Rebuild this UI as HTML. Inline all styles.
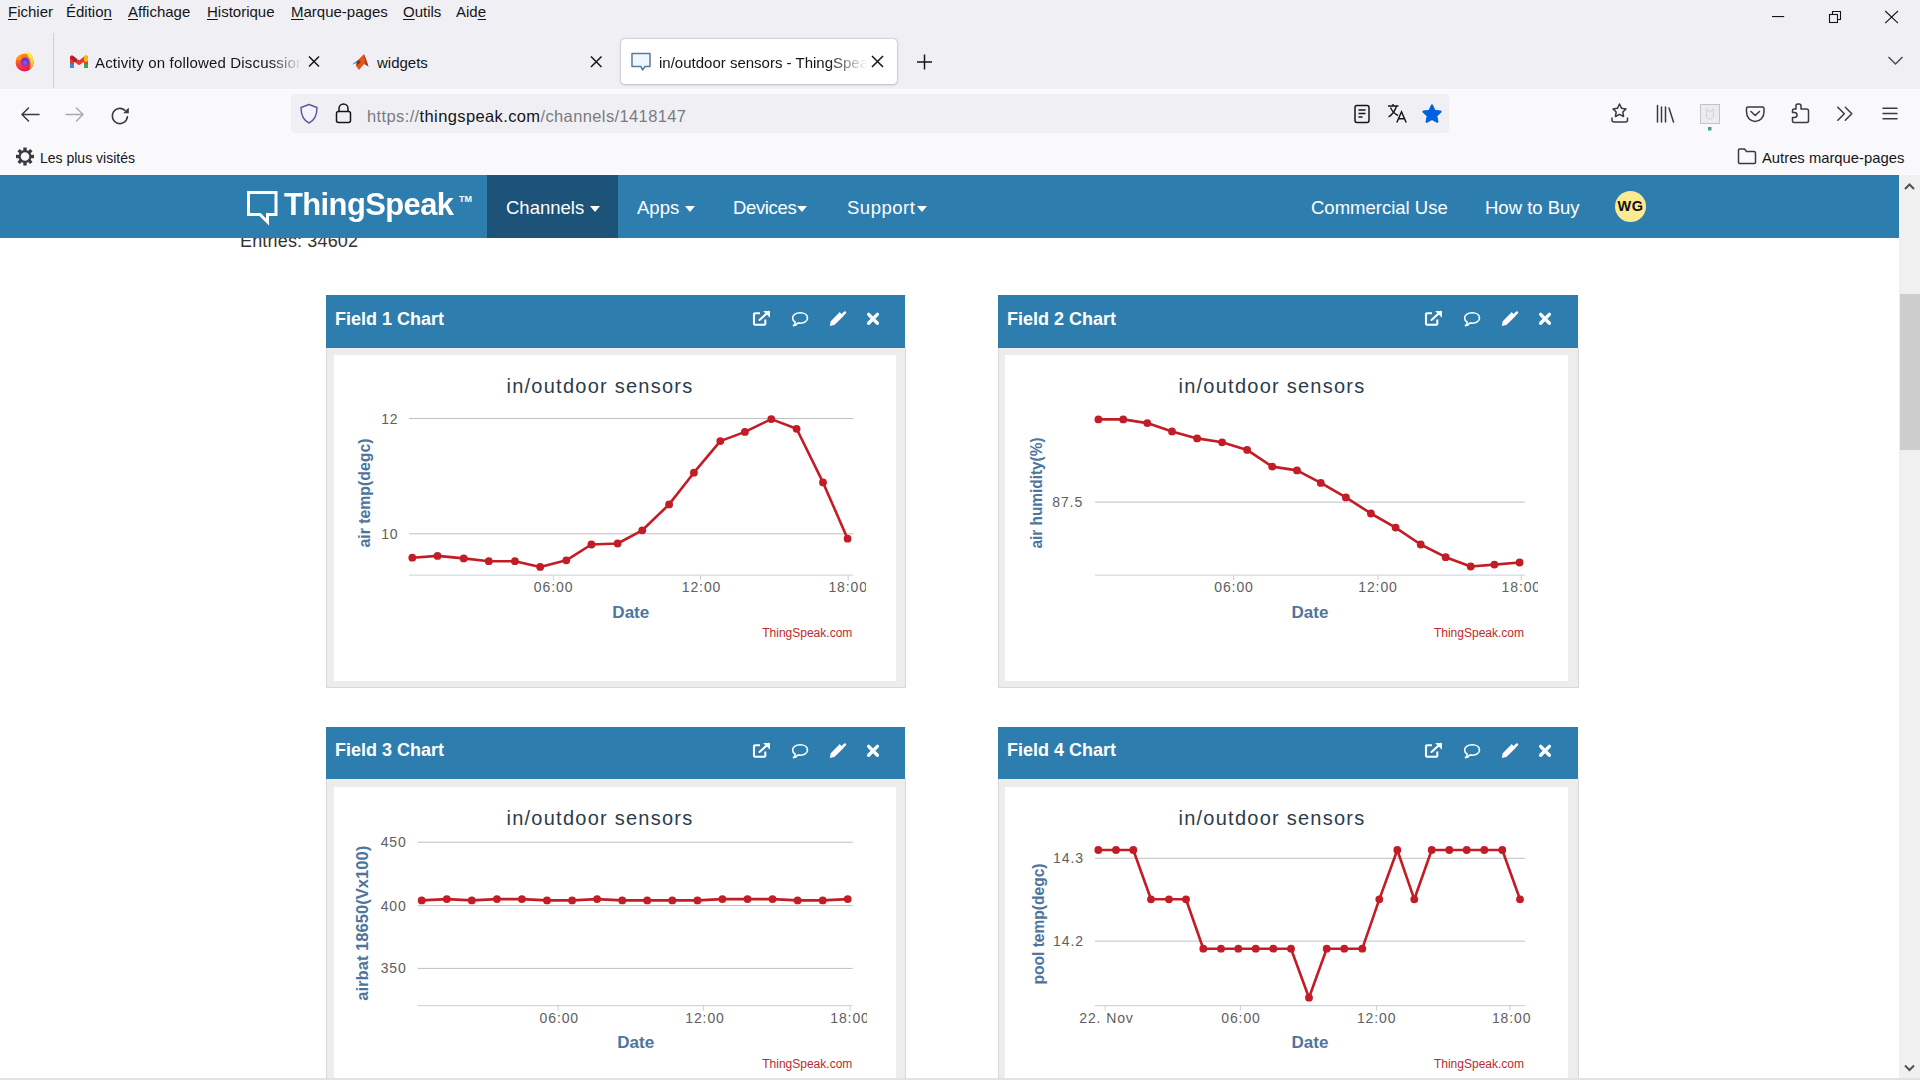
<!DOCTYPE html>
<html><head><meta charset="utf-8"><title>in/outdoor sensors - ThingSpeak IoT</title>
<style>
*{box-sizing:border-box}
html,body{margin:0;padding:0;width:1920px;height:1080px;overflow:hidden;background:#fff;font-family:"Liberation Sans",sans-serif;color:#15141a}
.a{position:absolute}
svg{position:absolute;overflow:visible}
#menubar{left:0;top:0;width:1920px;height:89px;background:#f0f0f4}
.mi{position:absolute;top:3px;font-size:15px;line-height:18px;color:#15141a}
.mi u{text-decoration:underline;text-underline-offset:2px;text-decoration-thickness:1px}
#nav{left:0;top:89px;width:1920px;height:86px;background:#f9f9fb}
#urlbar{left:291px;top:94px;width:1158px;height:39px;background:#f0f0f4;border-radius:4px}
.tab{position:absolute;font-size:15px;line-height:18px;white-space:nowrap;overflow:hidden}
#content{left:0;top:175px;width:1899px;height:905px;background:#fff;overflow:hidden}
#tsnav{left:0;top:175px;width:1899px;height:63px;background:#2d7eaf}
.nv{position:absolute;top:197px;font-size:18.5px;line-height:22px;color:#fff;white-space:nowrap}
.caret{display:inline-block;width:0;height:0;margin-left:1px;border-left:5px solid transparent;border-right:5px solid transparent;border-top:6px solid #fff;vertical-align:middle;position:relative;top:0px}
.ph{position:absolute;background:#2d7eaf;color:#fff}
.pt{position:absolute;left:9px;top:13px;font-weight:bold;font-size:18px;line-height:22px;white-space:nowrap}
.pi{top:16px}
.pb{position:absolute;background:#ededed;border:1px solid #d8d8d8;border-top:0}
.pw{position:absolute;background:#fff}
.ch{position:absolute}
.ttl{font-size:20px;letter-spacing:1.25px;fill:#2b3b4d;font-family:"Liberation Sans",sans-serif}
.lbl{font-size:14px;letter-spacing:.9px;fill:#606060;font-family:"Liberation Sans",sans-serif}
.at{font-size:16px;font-weight:bold;fill:#4d759e;font-family:"Liberation Sans",sans-serif}
.cr{font-size:12px;fill:#c0282d;font-family:"Liberation Sans",sans-serif}
#sb{left:1899px;top:175px;width:21px;height:905px;background:#f0f0f0}
#thumb{left:1900px;top:294px;width:20px;height:156px;background:#cdcdcd}
</style></head>
<body>
<!-- ============ BROWSER CHROME ============ -->
<div id="menubar" class="a"></div>
<div class="mi" style="left:8px"><u>F</u>ichier</div>
<div class="mi" style="left:66px">Éditio<u>n</u></div>
<div class="mi" style="left:128px"><u>A</u>ffichage</div>
<div class="mi" style="left:207px"><u>H</u>istorique</div>
<div class="mi" style="left:291px"><u>M</u>arque-pages</div>
<div class="mi" style="left:403px"><u>O</u>utils</div>
<div class="mi" style="left:456px">Aid<u>e</u></div>

<!-- window controls -->
<svg style="left:1760px;top:0" width="160" height="80" viewBox="1760 0 160 80">
 <rect x="1772" y="16" width="12.2" height="1.1" fill="#15141a"/>
 <g fill="none" stroke="#15141a" stroke-width="1.1">
  <rect x="1829.5" y="14.5" width="8" height="8"/>
  <path d="M1832.5 14.5 V11.5 H1840.5 V19.5 H1837.5"/>
  <path d="M1885.2 11 L1898 23.2 M1898 11 L1885.2 23.2"/>
 </g>
 <path d="M1888.5 57 L1895.5 64 L1902.5 57" fill="none" stroke="#4a4a55" stroke-width="1.5"/>
</svg>
<!-- tabs -->
<svg style="left:0;top:28px" width="60" height="62" viewBox="0 28 60 62">
 <defs>
  <linearGradient id="ffb" x1="0" y1="0" x2="0.3" y2="1"><stop offset="0" stop-color="#ffa20f"/><stop offset="0.45" stop-color="#ff5a2a"/><stop offset="1" stop-color="#e8144f"/></linearGradient>
  <linearGradient id="ffy" x1="0" y1="0" x2="0" y2="1"><stop offset="0" stop-color="#f3f84a"/><stop offset="1" stop-color="#ffb02a"/></linearGradient>
  <radialGradient id="ffp" cx="0.5" cy="0.6" r="0.6"><stop offset="0" stop-color="#8c5cff"/><stop offset="1" stop-color="#6a22b8"/></radialGradient>
 </defs>
 <circle cx="24.6" cy="62.4" r="9" fill="url(#ffb)"/>
 <path d="M26.5 51 C31 52.5 34 57 33.6 62.5 C33.3 66 31.5 68.5 29.5 69.5 C31 66 31 61 28.5 57.5 C27.5 55.5 26.5 53.5 26.5 51 Z" fill="url(#ffy)"/>
 <path d="M16 60 C17 56.5 19.5 55 22 55 C20.5 56.5 20.5 58 21.5 59.5 Z" fill="#ff9a10"/>
 <ellipse cx="25" cy="62" rx="4" ry="4.3" fill="url(#ffp)"/>
 <path d="M17 64.5 C19 69 24 70.5 28.5 69 C25 68.5 22 67 20.5 65 Z" fill="#ff2d6a" opacity=".7"/>
 <rect x="53" y="33" width="1" height="55" fill="#cfcfd8"/>
</svg>
<svg style="left:64px;top:48px" width="30" height="26" viewBox="64 48 30 26">
 <path d="M72 68 V62" fill="none" stroke="#4285f4" stroke-width="4"/>
 <path d="M86 68 V62" fill="none" stroke="#34a853" stroke-width="4"/>
 <path d="M72 62.5 V57.5 L79 63 L86 57.5 V62.5" fill="none" stroke="#e53a2f" stroke-width="4" stroke-linejoin="round" stroke-linecap="round"/>
 <path d="M72 57.5 L75 60" stroke="#b3202a" stroke-width="4" stroke-linecap="round"/>
 <path d="M86 57.5 V60" stroke="#fbbc04" stroke-width="4" stroke-linecap="round"/>
</svg>
<div class="tab" style="left:95px;top:54px;width:207px;letter-spacing:.17px;color:#15141a;-webkit-mask-image:linear-gradient(90deg,#000 175px,transparent 207px)">Activity on followed Discussion</div>
<svg style="left:300px;top:50px" width="24" height="24" viewBox="300 50 24 24">
 <path d="M309 56.5 L319 66.5 M319 56.5 L309 66.5" stroke="#15141a" stroke-width="1.5"/>
</svg>
<svg style="left:350px;top:52px" width="20" height="20" viewBox="350 52 20 20">
 <path d="M352 64.5 L358 60 L361 62 Z" fill="#3b86b8"/>
 <path d="M358 60 L364 54 L368.5 66.5 L364 64 L359 70 L356 66 Z" fill="#e2561e"/>
 <path d="M364 54 L368.5 66.5 L365.5 64.5 Z" fill="#a8370e"/>
 <path d="M356 66 L358 60 L361 62 Z" fill="#8c2a0a"/>
</svg>
<div class="tab" style="left:377px;top:54px;color:#15141a">widgets</div>
<svg style="left:585px;top:50px" width="24" height="24" viewBox="585 50 24 24">
 <path d="M591 56.5 L601.5 67 M601.5 56.5 L591 67" stroke="#15141a" stroke-width="1.5"/>
</svg>
<!-- active tab -->
<div class="a" style="left:621px;top:39px;width:276px;height:45px;background:#fff;border-radius:4px;box-shadow:0 0 2px rgba(0,0,0,.35),0 1px 3px rgba(0,0,0,.12)"></div>
<svg style="left:628px;top:50px" width="26" height="24" viewBox="628 50 26 24">
 <path d="M632 53.5 H650 V66.5 H645 L642.5 70 L641 66.5 H632 Z" fill="#eef7ff" stroke="#5d7a95" stroke-width="1.5" stroke-linejoin="round"/>
</svg>
<div class="tab" style="left:659px;top:54px;width:208px;color:#15141a;-webkit-mask-image:linear-gradient(90deg,#000 170px,transparent 208px)">in/outdoor sensors - ThingSpeak IoT</div>
<svg style="left:866px;top:50px" width="24" height="24" viewBox="866 50 24 24">
 <path d="M872 56 L883 67 M883 56 L872 67" stroke="#15141a" stroke-width="1.5"/>
</svg>
<svg style="left:912px;top:50px" width="24" height="24" viewBox="912 50 24 24">
 <path d="M924.5 54.5 V69.5 M917 62 H932" stroke="#15141a" stroke-width="1.5"/>
</svg>

<!-- nav toolbar -->
<div id="nav" class="a"></div>
<div class="a" style="left:0;top:89px;width:1920px;height:1px;background:#fdfdff"></div>
<div id="urlbar" class="a"></div>
<svg style="left:0;top:90px" width="160" height="50" viewBox="0 90 160 50">
 <g fill="none" stroke="#3a3944" stroke-width="1.5" stroke-linecap="round" stroke-linejoin="round">
  <path d="M22 114.5 H39 M28.5 108 L22 114.5 L28.5 121"/>
 </g>
 <g fill="none" stroke="#a9a9ae" stroke-width="1.5" stroke-linecap="round" stroke-linejoin="round">
  <path d="M66 114.5 H83 M76.5 108 L83 114.5 L76.5 121"/>
 </g>
 <g fill="none" stroke="#3a3944" stroke-width="1.5" stroke-linecap="round" stroke-linejoin="round">
  <path d="M127.4 116.9 A7.6 7.6 0 1 1 125 110.4" stroke-width="1.6"/>
 </g>
</svg>
<svg style="left:100px;top:100px" width="40" height="28" viewBox="100 100 40 28"><path d="M128.8 107.6 V113.2 H123.2 Z" fill="#3a3944"/></svg>
<svg style="left:296px;top:100px" width="60" height="28" viewBox="296 100 60 28">
 <path d="M309 104.5 L317 107.5 C317 115 314 120.5 309 123 C304 120.5 301 115 301 107.5 Z" fill="#f5f1ff" stroke="#5b5b9b" stroke-width="1.5" stroke-linejoin="round"/>
 <g fill="none" stroke="#15141a" stroke-width="1.5">
  <path d="M339 111.5 V108.5 A4.5 4.5 0 0 1 348 108.5 V111.5"/>
  <rect x="336.5" y="111.5" width="14" height="11" rx="2"/>
 </g>
</svg>
<div class="a" style="left:367px;top:106px;font-size:16.5px;line-height:20px;letter-spacing:.38px;white-space:nowrap;color:#7a7a80"><span>https://</span><span style="color:#15141a">thingspeak.com</span><span>/channels/1418147</span></div>
<svg style="left:1350px;top:100px" width="100" height="28" viewBox="1350 100 100 28">
 <g fill="none" stroke="#15141a" stroke-width="1.5">
  <rect x="1355" y="105.5" width="14" height="17" rx="2"/>
  <path d="M1358.5 110 H1365.5 M1358.5 113.5 H1365.5 M1358.5 117 H1362.5"/>
  <path d="M1388 106 H1398.5 M1393 104 V106 M1396.5 106 C1395 111 1392.5 114.5 1388.5 117 M1390.5 107.5 C1392 111 1395 114 1398 115.5" stroke-width="1.4"/>
  <path d="M1396.8 122.5 L1401.5 111.8 L1406.2 122.5 M1398.5 118.8 H1404.5" stroke-width="1.5"/>
 </g>
 <path d="M1432 105.5 L1434.6 110.9 L1440.5 111.7 L1436.2 115.8 L1437.3 121.7 L1432 118.9 L1426.7 121.7 L1427.8 115.8 L1423.5 111.7 L1429.4 110.9 Z" fill="#0061e0" stroke="#0061e0" stroke-width="2.2" stroke-linejoin="round"/>
</svg>
<svg style="left:1600px;top:95px" width="320" height="40" viewBox="1600 95 320 40">
 <g fill="none" stroke="#3a3944" stroke-width="1.5" stroke-linecap="round" stroke-linejoin="round">
  <path d="M1619.5 104 L1621.6 108.3 L1626 108.9 L1622.8 112 L1623.6 116.5 L1619.5 114.3 L1615.4 116.5 L1616.2 112 L1613 108.9 L1617.4 108.3 Z"/>
  <path d="M1612 118 V120 Q1612 122 1614 122 H1625.5 Q1627.5 122 1627.5 120 V118"/>
  <path d="M1657.5 105.5 V122 M1661.5 107 V122 M1665.5 107 V122 M1669 108 L1673.5 122"/>
  <path d="M1748 107 H1762.5 C1763.5 107 1764 107.5 1764 108.5 V112 C1764 117.5 1760 121.5 1755.2 121.5 C1750.3 121.5 1746.5 117.5 1746.5 112 V108.5 C1746.5 107.5 1747 107 1748 107 Z"/>
  <path d="M1751 111.5 L1755.2 115.5 L1759.5 111.5"/>
  <path d="M1796 109 V105.5 C1796 104.5 1797 104 1798 104 H1799 C1800 104 1801 105 1801 106 V109 H1806.5 C1807.5 109 1808.5 110 1808.5 111 V121 C1808.5 122 1807.5 122.5 1806.5 122.5 H1794 C1793 122.5 1792.5 122 1792.5 121 V117.5 H1794.5 C1796 117.5 1797 116.5 1797 115 C1797 113.5 1796 112.5 1794.5 112.5 H1792.5 V111 C1792.5 110 1793 109 1794 109 Z"/>
  <path d="M1837.8 107.3 L1844.3 113.8 L1837.8 120.3 M1845.3 107.3 L1851.8 113.8 L1845.3 120.3"/>
  <path d="M1883 108.3 H1897 M1883 113.5 H1897 M1883 118.7 H1897"/>
 </g>
 <rect x="1700.5" y="104.5" width="19" height="19" fill="#ececee" stroke="#c4c4c8"/>
 <path d="M1706.5 108.5 L1708 111 H1712 L1713.5 108.5 V116 C1713.5 118 1712 119 1710 119 C1708 119 1706.5 118 1706.5 116 Z" fill="none" stroke="#d6d0d6" stroke-width="1"/>
 <rect x="1708" y="127" width="3.5" height="3.5" fill="#3fa287"/>
</svg>

<!-- bookmarks -->
<svg style="left:10px;top:142px" width="30" height="30" viewBox="10 142 30 30">
 <g transform="translate(25,156.5)">
  <circle r="5.4" fill="none" stroke="#3a3944" stroke-width="2.2"/>
  <g fill="#3a3944"><rect x="-1.7" y="-9" width="3.4" height="3.8" transform="rotate(0)"/><rect x="-1.7" y="-9" width="3.4" height="3.8" transform="rotate(45)"/><rect x="-1.7" y="-9" width="3.4" height="3.8" transform="rotate(90)"/><rect x="-1.7" y="-9" width="3.4" height="3.8" transform="rotate(135)"/><rect x="-1.7" y="-9" width="3.4" height="3.8" transform="rotate(180)"/><rect x="-1.7" y="-9" width="3.4" height="3.8" transform="rotate(225)"/><rect x="-1.7" y="-9" width="3.4" height="3.8" transform="rotate(270)"/><rect x="-1.7" y="-9" width="3.4" height="3.8" transform="rotate(315)"/></g>
 </g>
</svg>
<div class="a" style="left:40px;top:149px;font-size:14px;line-height:18px;white-space:nowrap">Les plus visités</div>
<svg style="left:1730px;top:142px" width="30" height="30" viewBox="1730 142 30 30">
 <path d="M1739.5 149 H1744.5 L1746.5 151.5 H1754 Q1755.5 151.5 1755.5 153 V162.5 Q1755.5 163.5 1754.5 163.5 H1739.5 Q1738.5 163.5 1738.5 162.5 V150 Q1738.5 149 1739.5 149 Z" fill="none" stroke="#3a3944" stroke-width="1.5" stroke-linejoin="round"/>
</svg>
<div class="a" style="left:1762px;top:149px;font-size:14.8px;line-height:18px;white-space:nowrap">Autres marque-pages</div>

<!-- ============ PAGE CONTENT ============ -->
<div id="content" class="a"></div>
<div class="a" style="left:240px;top:230px;font-size:18px;letter-spacing:.15px;line-height:22px;color:#333;white-space:nowrap">Entries: 34602</div>


<div class="ph" style="left:326px;top:295px;width:579px;height:53px"><span class="pt" style="top:13px">Field 1 Chart</span>
<svg class="pi" style="left:426px" width="130" height="20" viewBox="0 0 130 20">
 <g fill="none" stroke="#fff" stroke-width="2.1" stroke-linejoin="round">
  <path d="M8 2.3 H3 Q2 2.3 2 3.3 V12.7 Q2 13.7 3 13.7 H12.3 Q13.3 13.7 13.3 12.7 V8.5"/>
  <path d="M7.5 9 L16.5 0.8" stroke-linecap="round"/>
 </g>
 <path d="M11.2 0 H18 V6.8 Z" fill="#fff"/>
 <path d="M48 1.8 C52.5 1.8 55.5 4 55.5 7 C55.5 10 52.5 12.2 48.5 12.2 C47.5 12.2 46.8 12.1 46 11.9 C45 13.2 43.5 14.2 41.5 14.6 C42.5 13.6 43.2 12.5 43.3 11.2 C41.6 10.2 40.6 8.7 40.6 7 C40.6 4 43.5 1.8 48 1.8 Z" fill="none" stroke="#fff" stroke-width="1.6" stroke-linejoin="round"/>
 <path d="M78.2 14.4 L79.2 10.2 L87.8 1.6 L91.2 5 L82.6 13.6 Z" fill="#fff" stroke="#fff" stroke-width="0.8" stroke-linejoin="round"/>
 <path d="M89 3.4 L92.3 0.6 C92.7 0.2 93.2 0.2 93.6 0.6 L94 1 C94.4 1.4 94.4 1.9 94 2.3 L90.8 5.6 Z" fill="#fff"/>
 <path d="M116.6 3.4 L125.4 12.2 M125.4 3.4 L116.6 12.2" stroke="#fff" stroke-width="3.4" stroke-linecap="round"/>
</svg></div>
<div class="pb" style="left:326px;top:348px;width:580px;height:340px"></div>
<div class="pw" style="left:334px;top:355px;width:562px;height:326px"></div>


<div class="ph" style="left:998px;top:295px;width:580px;height:53px"><span class="pt" style="top:13px">Field 2 Chart</span>
<svg class="pi" style="left:426px" width="130" height="20" viewBox="0 0 130 20">
 <g fill="none" stroke="#fff" stroke-width="2.1" stroke-linejoin="round">
  <path d="M8 2.3 H3 Q2 2.3 2 3.3 V12.7 Q2 13.7 3 13.7 H12.3 Q13.3 13.7 13.3 12.7 V8.5"/>
  <path d="M7.5 9 L16.5 0.8" stroke-linecap="round"/>
 </g>
 <path d="M11.2 0 H18 V6.8 Z" fill="#fff"/>
 <path d="M48 1.8 C52.5 1.8 55.5 4 55.5 7 C55.5 10 52.5 12.2 48.5 12.2 C47.5 12.2 46.8 12.1 46 11.9 C45 13.2 43.5 14.2 41.5 14.6 C42.5 13.6 43.2 12.5 43.3 11.2 C41.6 10.2 40.6 8.7 40.6 7 C40.6 4 43.5 1.8 48 1.8 Z" fill="none" stroke="#fff" stroke-width="1.6" stroke-linejoin="round"/>
 <path d="M78.2 14.4 L79.2 10.2 L87.8 1.6 L91.2 5 L82.6 13.6 Z" fill="#fff" stroke="#fff" stroke-width="0.8" stroke-linejoin="round"/>
 <path d="M89 3.4 L92.3 0.6 C92.7 0.2 93.2 0.2 93.6 0.6 L94 1 C94.4 1.4 94.4 1.9 94 2.3 L90.8 5.6 Z" fill="#fff"/>
 <path d="M116.6 3.4 L125.4 12.2 M125.4 3.4 L116.6 12.2" stroke="#fff" stroke-width="3.4" stroke-linecap="round"/>
</svg></div>
<div class="pb" style="left:998px;top:348px;width:581px;height:340px"></div>
<div class="pw" style="left:1005px;top:355px;width:563px;height:326px"></div>


<div class="ph" style="left:326px;top:727px;width:579px;height:52px"><span class="pt" style="top:12px">Field 3 Chart</span>
<svg class="pi" style="left:426px" width="130" height="20" viewBox="0 0 130 20">
 <g fill="none" stroke="#fff" stroke-width="2.1" stroke-linejoin="round">
  <path d="M8 2.3 H3 Q2 2.3 2 3.3 V12.7 Q2 13.7 3 13.7 H12.3 Q13.3 13.7 13.3 12.7 V8.5"/>
  <path d="M7.5 9 L16.5 0.8" stroke-linecap="round"/>
 </g>
 <path d="M11.2 0 H18 V6.8 Z" fill="#fff"/>
 <path d="M48 1.8 C52.5 1.8 55.5 4 55.5 7 C55.5 10 52.5 12.2 48.5 12.2 C47.5 12.2 46.8 12.1 46 11.9 C45 13.2 43.5 14.2 41.5 14.6 C42.5 13.6 43.2 12.5 43.3 11.2 C41.6 10.2 40.6 8.7 40.6 7 C40.6 4 43.5 1.8 48 1.8 Z" fill="none" stroke="#fff" stroke-width="1.6" stroke-linejoin="round"/>
 <path d="M78.2 14.4 L79.2 10.2 L87.8 1.6 L91.2 5 L82.6 13.6 Z" fill="#fff" stroke="#fff" stroke-width="0.8" stroke-linejoin="round"/>
 <path d="M89 3.4 L92.3 0.6 C92.7 0.2 93.2 0.2 93.6 0.6 L94 1 C94.4 1.4 94.4 1.9 94 2.3 L90.8 5.6 Z" fill="#fff"/>
 <path d="M116.6 3.4 L125.4 12.2 M125.4 3.4 L116.6 12.2" stroke="#fff" stroke-width="3.4" stroke-linecap="round"/>
</svg></div>
<div class="pb" style="left:326px;top:779px;width:580px;height:341px"></div>
<div class="pw" style="left:334px;top:787px;width:562px;height:326px"></div>


<div class="ph" style="left:998px;top:727px;width:580px;height:52px"><span class="pt" style="top:12px">Field 4 Chart</span>
<svg class="pi" style="left:426px" width="130" height="20" viewBox="0 0 130 20">
 <g fill="none" stroke="#fff" stroke-width="2.1" stroke-linejoin="round">
  <path d="M8 2.3 H3 Q2 2.3 2 3.3 V12.7 Q2 13.7 3 13.7 H12.3 Q13.3 13.7 13.3 12.7 V8.5"/>
  <path d="M7.5 9 L16.5 0.8" stroke-linecap="round"/>
 </g>
 <path d="M11.2 0 H18 V6.8 Z" fill="#fff"/>
 <path d="M48 1.8 C52.5 1.8 55.5 4 55.5 7 C55.5 10 52.5 12.2 48.5 12.2 C47.5 12.2 46.8 12.1 46 11.9 C45 13.2 43.5 14.2 41.5 14.6 C42.5 13.6 43.2 12.5 43.3 11.2 C41.6 10.2 40.6 8.7 40.6 7 C40.6 4 43.5 1.8 48 1.8 Z" fill="none" stroke="#fff" stroke-width="1.6" stroke-linejoin="round"/>
 <path d="M78.2 14.4 L79.2 10.2 L87.8 1.6 L91.2 5 L82.6 13.6 Z" fill="#fff" stroke="#fff" stroke-width="0.8" stroke-linejoin="round"/>
 <path d="M89 3.4 L92.3 0.6 C92.7 0.2 93.2 0.2 93.6 0.6 L94 1 C94.4 1.4 94.4 1.9 94 2.3 L90.8 5.6 Z" fill="#fff"/>
 <path d="M116.6 3.4 L125.4 12.2 M125.4 3.4 L116.6 12.2" stroke="#fff" stroke-width="3.4" stroke-linecap="round"/>
</svg></div>
<div class="pb" style="left:998px;top:779px;width:581px;height:341px"></div>
<div class="pw" style="left:1005px;top:787px;width:563px;height:326px"></div>

<svg class="ch" style="left:326px;top:295px" width="581" height="400" viewBox="326 295 581 400">
<text x="600" y="392.5" text-anchor="middle" class="ttl">in/outdoor sensors</text>
<rect x="409" y="418.0" width="444.4" height="1" fill="#c0c0c0"/>
<rect x="409" y="533.3" width="444.4" height="1" fill="#c0c0c0"/>
<rect x="409" y="574.6" width="444.4" height="1" fill="#c8d0dc"/>
<rect x="553.1" y="575.1" width="1" height="5" fill="#c8d0dc"/>
<rect x="700.1" y="575.1" width="1" height="5" fill="#c8d0dc"/>
<rect x="847.7" y="575.1" width="1" height="5" fill="#c8d0dc"/>
<text x="398.5" y="423.5" text-anchor="end" class="lbl">12</text>
<text x="398.5" y="538.8" text-anchor="end" class="lbl">10</text>
<clipPath id="clip326_295"><rect x="326" y="295" width="540" height="400"/></clipPath>
<text x="553.6" y="592.1" text-anchor="middle" class="lbl" clip-path="url(#clip326_295)">06:00</text>
<text x="701.5" y="592.1" text-anchor="middle" class="lbl" clip-path="url(#clip326_295)">12:00</text>
<text x="848.2" y="592.1" text-anchor="middle" class="lbl" clip-path="url(#clip326_295)">18:00</text>
<text x="630.8" y="617.6" text-anchor="middle" class="at" style="font-size:17px">Date</text>
<text transform="translate(369.6,493) rotate(-90)" x="0" y="0" text-anchor="middle" class="at" textLength="109" lengthAdjust="spacingAndGlyphs">air temp(degc)</text>
<text x="852.3" y="637.1" text-anchor="end" class="cr">ThingSpeak.com</text>
<polyline points="412.3,557.7 437.5,555.9 463.7,558.4 488.8,561.2 514.9,561.2 540.2,566.9 566.3,560.3 591.4,544.5 617.6,543.5 642.3,530.3 669.1,504.4 693.9,472.7 720.3,441.1 744.9,431.9 771.3,419.1 796.6,428.8 823.0,482.4 847.6,538.7" fill="none" stroke="#c21d26" stroke-width="2.6" stroke-linejoin="round"/>
<circle cx="412.3" cy="557.7" r="3.9" fill="#c21d26"/>
<circle cx="437.5" cy="555.9" r="3.9" fill="#c21d26"/>
<circle cx="463.7" cy="558.4" r="3.9" fill="#c21d26"/>
<circle cx="488.8" cy="561.2" r="3.9" fill="#c21d26"/>
<circle cx="514.9" cy="561.2" r="3.9" fill="#c21d26"/>
<circle cx="540.2" cy="566.9" r="3.9" fill="#c21d26"/>
<circle cx="566.3" cy="560.3" r="3.9" fill="#c21d26"/>
<circle cx="591.4" cy="544.5" r="3.9" fill="#c21d26"/>
<circle cx="617.6" cy="543.5" r="3.9" fill="#c21d26"/>
<circle cx="642.3" cy="530.3" r="3.9" fill="#c21d26"/>
<circle cx="669.1" cy="504.4" r="3.9" fill="#c21d26"/>
<circle cx="693.9" cy="472.7" r="3.9" fill="#c21d26"/>
<circle cx="720.3" cy="441.1" r="3.9" fill="#c21d26"/>
<circle cx="744.9" cy="431.9" r="3.9" fill="#c21d26"/>
<circle cx="771.3" cy="419.1" r="3.9" fill="#c21d26"/>
<circle cx="796.6" cy="428.8" r="3.9" fill="#c21d26"/>
<circle cx="823.0" cy="482.4" r="3.9" fill="#c21d26"/>
<circle cx="847.6" cy="538.7" r="3.9" fill="#c21d26"/>
</svg>
<svg class="ch" style="left:998px;top:295px" width="581" height="400" viewBox="998 295 581 400">
<text x="1272" y="392.5" text-anchor="middle" class="ttl">in/outdoor sensors</text>
<rect x="1095" y="501.6" width="429.9000000000001" height="1" fill="#c0c0c0"/>
<rect x="1095" y="574.6" width="429.9000000000001" height="1" fill="#c8d0dc"/>
<rect x="1233.0" y="575.1" width="1" height="5" fill="#c8d0dc"/>
<rect x="1377.5" y="575.1" width="1" height="5" fill="#c8d0dc"/>
<rect x="1520.8" y="575.1" width="1" height="5" fill="#c8d0dc"/>
<text x="1083.1" y="507.1" text-anchor="end" class="lbl">87.5</text>
<clipPath id="clip998_295"><rect x="998" y="295" width="540" height="400"/></clipPath>
<text x="1234" y="592.1" text-anchor="middle" class="lbl" clip-path="url(#clip998_295)">06:00</text>
<text x="1378" y="592.1" text-anchor="middle" class="lbl" clip-path="url(#clip998_295)">12:00</text>
<text x="1521.3" y="592.1" text-anchor="middle" class="lbl" clip-path="url(#clip998_295)">18:00</text>
<text x="1310" y="617.6" text-anchor="middle" class="at" style="font-size:17px">Date</text>
<text transform="translate(1041.9,493) rotate(-90)" x="0" y="0" text-anchor="middle" class="at" textLength="111" lengthAdjust="spacingAndGlyphs">air humidity(%)</text>
<text x="1524" y="637.1" text-anchor="end" class="cr">ThingSpeak.com</text>
<polyline points="1098.4,419.4 1123.2,419.4 1147.3,423.1 1172.0,431.4 1197.1,438.4 1222.1,442.3 1247.1,449.9 1272.2,466.6 1297.0,470.4 1320.8,482.9 1345.9,497.4 1370.9,513.5 1395.6,527.6 1420.7,544.5 1445.7,557.2 1470.7,566.5 1494.4,564.6 1519.6,562.5" fill="none" stroke="#c21d26" stroke-width="2.6" stroke-linejoin="round"/>
<circle cx="1098.4" cy="419.4" r="3.9" fill="#c21d26"/>
<circle cx="1123.2" cy="419.4" r="3.9" fill="#c21d26"/>
<circle cx="1147.3" cy="423.1" r="3.9" fill="#c21d26"/>
<circle cx="1172.0" cy="431.4" r="3.9" fill="#c21d26"/>
<circle cx="1197.1" cy="438.4" r="3.9" fill="#c21d26"/>
<circle cx="1222.1" cy="442.3" r="3.9" fill="#c21d26"/>
<circle cx="1247.1" cy="449.9" r="3.9" fill="#c21d26"/>
<circle cx="1272.2" cy="466.6" r="3.9" fill="#c21d26"/>
<circle cx="1297.0" cy="470.4" r="3.9" fill="#c21d26"/>
<circle cx="1320.8" cy="482.9" r="3.9" fill="#c21d26"/>
<circle cx="1345.9" cy="497.4" r="3.9" fill="#c21d26"/>
<circle cx="1370.9" cy="513.5" r="3.9" fill="#c21d26"/>
<circle cx="1395.6" cy="527.6" r="3.9" fill="#c21d26"/>
<circle cx="1420.7" cy="544.5" r="3.9" fill="#c21d26"/>
<circle cx="1445.7" cy="557.2" r="3.9" fill="#c21d26"/>
<circle cx="1470.7" cy="566.5" r="3.9" fill="#c21d26"/>
<circle cx="1494.4" cy="564.6" r="3.9" fill="#c21d26"/>
<circle cx="1519.6" cy="562.5" r="3.9" fill="#c21d26"/>
</svg>
<svg class="ch" style="left:326px;top:727px" width="581" height="400" viewBox="326 727 581 400">
<text x="600" y="824.5" text-anchor="middle" class="ttl">in/outdoor sensors</text>
<rect x="417.8" y="841.7" width="434.90000000000003" height="1" fill="#c0c0c0"/>
<rect x="417.8" y="905.1" width="434.90000000000003" height="1" fill="#c0c0c0"/>
<rect x="417.8" y="967.9" width="434.90000000000003" height="1" fill="#c0c0c0"/>
<rect x="417.8" y="1005.1" width="434.90000000000003" height="1" fill="#c8d0dc"/>
<rect x="557.7" y="1005.6" width="1" height="5" fill="#c8d0dc"/>
<rect x="702.8" y="1005.6" width="1" height="5" fill="#c8d0dc"/>
<rect x="849.5" y="1005.6" width="1" height="5" fill="#c8d0dc"/>
<text x="406.7" y="847.2" text-anchor="end" class="lbl">450</text>
<text x="406.7" y="910.6" text-anchor="end" class="lbl">400</text>
<text x="406.7" y="973.4" text-anchor="end" class="lbl">350</text>
<clipPath id="clip326_727"><rect x="326" y="727" width="541" height="400"/></clipPath>
<text x="559.3" y="1022.6" text-anchor="middle" class="lbl" clip-path="url(#clip326_727)">06:00</text>
<text x="705" y="1022.6" text-anchor="middle" class="lbl" clip-path="url(#clip326_727)">12:00</text>
<text x="850" y="1022.6" text-anchor="middle" class="lbl" clip-path="url(#clip326_727)">18:00</text>
<text x="635.7" y="1048.1" text-anchor="middle" class="at" style="font-size:17px">Date</text>
<text transform="translate(368.3,923.3) rotate(-90)" x="0" y="0" text-anchor="middle" class="at" textLength="155" lengthAdjust="spacingAndGlyphs">airbat 18650(Vx100)</text>
<text x="852.3" y="1067.6" text-anchor="end" class="cr">ThingSpeak.com</text>
<polyline points="421.7,900.4 446.8,899.1 471.8,900.4 496.9,899.1 521.9,899.1 547.0,900.4 572.1,900.4 597.1,899.1 622.2,900.4 647.2,900.4 672.3,900.4 697.4,900.4 722.4,899.1 747.5,899.1 772.5,899.1 797.6,900.4 822.7,900.4 847.7,899.1" fill="none" stroke="#c21d26" stroke-width="2.6" stroke-linejoin="round"/>
<circle cx="421.7" cy="900.4" r="3.9" fill="#c21d26"/>
<circle cx="446.8" cy="899.1" r="3.9" fill="#c21d26"/>
<circle cx="471.8" cy="900.4" r="3.9" fill="#c21d26"/>
<circle cx="496.9" cy="899.1" r="3.9" fill="#c21d26"/>
<circle cx="521.9" cy="899.1" r="3.9" fill="#c21d26"/>
<circle cx="547.0" cy="900.4" r="3.9" fill="#c21d26"/>
<circle cx="572.1" cy="900.4" r="3.9" fill="#c21d26"/>
<circle cx="597.1" cy="899.1" r="3.9" fill="#c21d26"/>
<circle cx="622.2" cy="900.4" r="3.9" fill="#c21d26"/>
<circle cx="647.2" cy="900.4" r="3.9" fill="#c21d26"/>
<circle cx="672.3" cy="900.4" r="3.9" fill="#c21d26"/>
<circle cx="697.4" cy="900.4" r="3.9" fill="#c21d26"/>
<circle cx="722.4" cy="899.1" r="3.9" fill="#c21d26"/>
<circle cx="747.5" cy="899.1" r="3.9" fill="#c21d26"/>
<circle cx="772.5" cy="899.1" r="3.9" fill="#c21d26"/>
<circle cx="797.6" cy="900.4" r="3.9" fill="#c21d26"/>
<circle cx="822.7" cy="900.4" r="3.9" fill="#c21d26"/>
<circle cx="847.7" cy="899.1" r="3.9" fill="#c21d26"/>
</svg>
<svg class="ch" style="left:998px;top:727px" width="581" height="400" viewBox="998 727 581 400">
<text x="1272" y="824.5" text-anchor="middle" class="ttl">in/outdoor sensors</text>
<rect x="1095" y="857.8" width="430" height="1" fill="#c0c0c0"/>
<rect x="1095" y="940.6" width="430" height="1" fill="#c0c0c0"/>
<rect x="1095" y="1005.1" width="430" height="1" fill="#c8d0dc"/>
<rect x="1104.7" y="1005.6" width="1" height="5" fill="#c8d0dc"/>
<rect x="1239.9" y="1005.6" width="1" height="5" fill="#c8d0dc"/>
<rect x="1376.2" y="1005.6" width="1" height="5" fill="#c8d0dc"/>
<rect x="1509.5" y="1005.6" width="1" height="5" fill="#c8d0dc"/>
<text x="1083.9" y="863.3" text-anchor="end" class="lbl">14.3</text>
<text x="1083.9" y="946.1" text-anchor="end" class="lbl">14.2</text>
<text x="1106.5" y="1022.6" text-anchor="middle" class="lbl">22. Nov</text>
<text x="1241" y="1022.6" text-anchor="middle" class="lbl">06:00</text>
<text x="1376.7" y="1022.6" text-anchor="middle" class="lbl">12:00</text>
<text x="1511.7" y="1022.6" text-anchor="middle" class="lbl">18:00</text>
<text x="1310" y="1048.1" text-anchor="middle" class="at" style="font-size:17px">Date</text>
<text transform="translate(1043.5,924) rotate(-90)" x="0" y="0" text-anchor="middle" class="at" textLength="121" lengthAdjust="spacingAndGlyphs">pool temp(degc)</text>
<text x="1524" y="1067.6" text-anchor="end" class="cr">ThingSpeak.com</text>
<polyline points="1098.3,850.0 1116.0,850.0 1133.3,850.0 1151.0,899.3 1169.0,899.3 1186.0,899.3 1203.3,948.7 1221.0,948.7 1238.3,948.7 1255.7,948.7 1273.3,948.7 1291.0,948.7 1309.0,997.7 1326.7,948.7 1344.3,948.7 1362.3,948.7 1379.3,899.3 1397.3,850.0 1414.3,899.3 1431.7,850.0 1449.3,850.0 1466.7,850.0 1484.3,850.0 1502.3,850.0 1520.0,899.3" fill="none" stroke="#c21d26" stroke-width="2.6" stroke-linejoin="round"/>
<circle cx="1098.3" cy="850.0" r="3.9" fill="#c21d26"/>
<circle cx="1116.0" cy="850.0" r="3.9" fill="#c21d26"/>
<circle cx="1133.3" cy="850.0" r="3.9" fill="#c21d26"/>
<circle cx="1151.0" cy="899.3" r="3.9" fill="#c21d26"/>
<circle cx="1169.0" cy="899.3" r="3.9" fill="#c21d26"/>
<circle cx="1186.0" cy="899.3" r="3.9" fill="#c21d26"/>
<circle cx="1203.3" cy="948.7" r="3.9" fill="#c21d26"/>
<circle cx="1221.0" cy="948.7" r="3.9" fill="#c21d26"/>
<circle cx="1238.3" cy="948.7" r="3.9" fill="#c21d26"/>
<circle cx="1255.7" cy="948.7" r="3.9" fill="#c21d26"/>
<circle cx="1273.3" cy="948.7" r="3.9" fill="#c21d26"/>
<circle cx="1291.0" cy="948.7" r="3.9" fill="#c21d26"/>
<circle cx="1309.0" cy="997.7" r="3.9" fill="#c21d26"/>
<circle cx="1326.7" cy="948.7" r="3.9" fill="#c21d26"/>
<circle cx="1344.3" cy="948.7" r="3.9" fill="#c21d26"/>
<circle cx="1362.3" cy="948.7" r="3.9" fill="#c21d26"/>
<circle cx="1379.3" cy="899.3" r="3.9" fill="#c21d26"/>
<circle cx="1397.3" cy="850.0" r="3.9" fill="#c21d26"/>
<circle cx="1414.3" cy="899.3" r="3.9" fill="#c21d26"/>
<circle cx="1431.7" cy="850.0" r="3.9" fill="#c21d26"/>
<circle cx="1449.3" cy="850.0" r="3.9" fill="#c21d26"/>
<circle cx="1466.7" cy="850.0" r="3.9" fill="#c21d26"/>
<circle cx="1484.3" cy="850.0" r="3.9" fill="#c21d26"/>
<circle cx="1502.3" cy="850.0" r="3.9" fill="#c21d26"/>
<circle cx="1520.0" cy="899.3" r="3.9" fill="#c21d26"/>
</svg>

<!-- ThingSpeak navbar (fixed, above content) -->
<div id="tsnav" class="a"></div>
<div class="a" style="left:487px;top:175px;width:131px;height:63px;background:#1d5279"></div>
<svg style="left:244px;top:188px" width="40" height="40" viewBox="244 188 40 40">
 <path d="M248.5 192.5 H276 V214.5 H267.5 V222 L260 214.5 H248.5 Z" fill="none" stroke="#fff" stroke-width="3" stroke-linejoin="miter"/>
</svg>
<div class="a" style="left:284px;top:186px;font-size:32px;line-height:36px;font-weight:bold;color:#fff;letter-spacing:-.6px;white-space:nowrap;transform:scaleX(.966);transform-origin:0 0">ThingSpeak</div>
<div class="a" style="left:459px;top:194px;font-size:9px;line-height:10px;font-weight:bold;color:#fff;white-space:nowrap">TM</div>
<div class="nv" style="left:506px">Channels <span class="caret"></span></div>
<div class="nv" style="left:637px">Apps <span class="caret"></span></div>
<div class="nv" style="left:733px;letter-spacing:-.35px">Devices<span class="caret"></span></div>
<div class="nv" style="left:847px;letter-spacing:.5px">Support<span class="caret" style="margin-left:2px"></span></div>
<div class="nv" style="left:1311px">Commercial Use</div>
<div class="nv" style="left:1485px">How to Buy</div>
<div class="a" style="left:1615px;top:191px;width:31px;height:31px;border-radius:50%;background:#fde98f;color:#111;font-weight:bold;font-size:14.5px;letter-spacing:.6px;line-height:31px;text-align:center">WG</div>

<!-- scrollbar -->
<div id="sb" class="a"></div>
<div id="thumb" class="a"></div>
<svg style="left:1899px;top:175px" width="21" height="905" viewBox="1899 175 21 905">
 <path d="M1905 189 L1909.5 184.5 L1914 189" fill="none" stroke="#505050" stroke-width="2"/>
 <path d="M1905 1065.5 L1909.5 1070 L1914 1065.5" fill="none" stroke="#505050" stroke-width="2"/>
</svg>
<div class="a" style="left:0;top:1078px;width:1920px;height:2px;background:#e2e2e2"></div>
</body></html>
